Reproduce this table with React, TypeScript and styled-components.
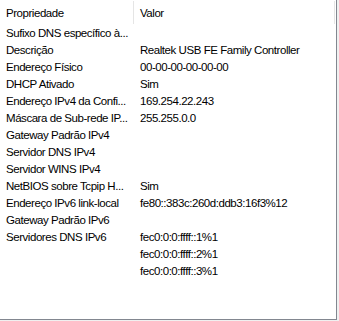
import React from 'react';
import styled, { createGlobalStyle } from 'styled-components';

const GlobalStyle = createGlobalStyle`
  html, body {
    margin: 0;
    padding: 0;
    background: #f0f0f0;
  }
  body {
    font-family: "Liberation Sans", Arial, sans-serif;
    font-size: 11.5px;
    letter-spacing: -0.45px;
    color: #000;
  }
`;

const Frame = styled.div`
  width: 339px;
  height: 321px;
  background: #f0f0f0;
`;

const ListView = styled.div`
  width: 336px;
  height: 319px;
  background: #fff;
  border-right: 1px solid #828790;
  border-bottom: 1px solid #828790;
  overflow: hidden;
`;

const Header = styled.div`
  display: grid;
  grid-template-columns: 134px 201px;
  height: 25px;
`;

const HeaderCell = styled.div`
  display: flex;
  align-items: center;
  padding: 0 6px;
  margin-top: 1px;
  height: 23px;
  border-right: 1px solid #e5e5e5;
  white-space: nowrap;
`;

const Row = styled.div`
  display: grid;
  grid-template-columns: 134px 1fr;
  height: 17px;
  line-height: 17px;
`;

const Cell = styled.div`
  padding-left: 6px;
  white-space: nowrap;
  overflow: hidden;
`;

interface Prop {
  name: string;
  value?: string;
}

const properties: Prop[] = [
  { name: 'Sufixo DNS específico à...' },
  { name: 'Descrição', value: 'Realtek USB FE Family Controller' },
  { name: 'Endereço Físico', value: '00-00-00-00-00-00' },
  { name: 'DHCP Ativado', value: 'Sim' },
  { name: 'Endereço IPv4 da Confi...', value: '169.254.22.243' },
  { name: 'Máscara de Sub-rede IP...', value: '255.255.0.0' },
  { name: 'Gateway Padrão IPv4' },
  { name: 'Servidor DNS IPv4' },
  { name: 'Servidor WINS IPv4' },
  { name: 'NetBIOS sobre Tcpip H...', value: 'Sim' },
  { name: 'Endereço IPv6 link-local', value: 'fe80::383c:260d:ddb3:16f3%12' },
  { name: 'Gateway Padrão IPv6' },
  { name: 'Servidores DNS IPv6', value: 'fec0:0:0:ffff::1%1' },
  { name: '', value: 'fec0:0:0:ffff::2%1' },
  { name: '', value: 'fec0:0:0:ffff::3%1' },
];

export default function App(): JSX.Element {
  return (
    <>
      <GlobalStyle />
      <Frame>
        <ListView>
          <Header>
            <HeaderCell>Propriedade</HeaderCell>
            <HeaderCell>Valor</HeaderCell>
          </Header>
          {properties.map((p, i) => (
            <Row key={`prop-${i}`}>
              <Cell>{p.name}</Cell>
              <Cell>{p.value ?? ''}</Cell>
            </Row>
          ))}
        </ListView>
      </Frame>
    </>
  );
}
